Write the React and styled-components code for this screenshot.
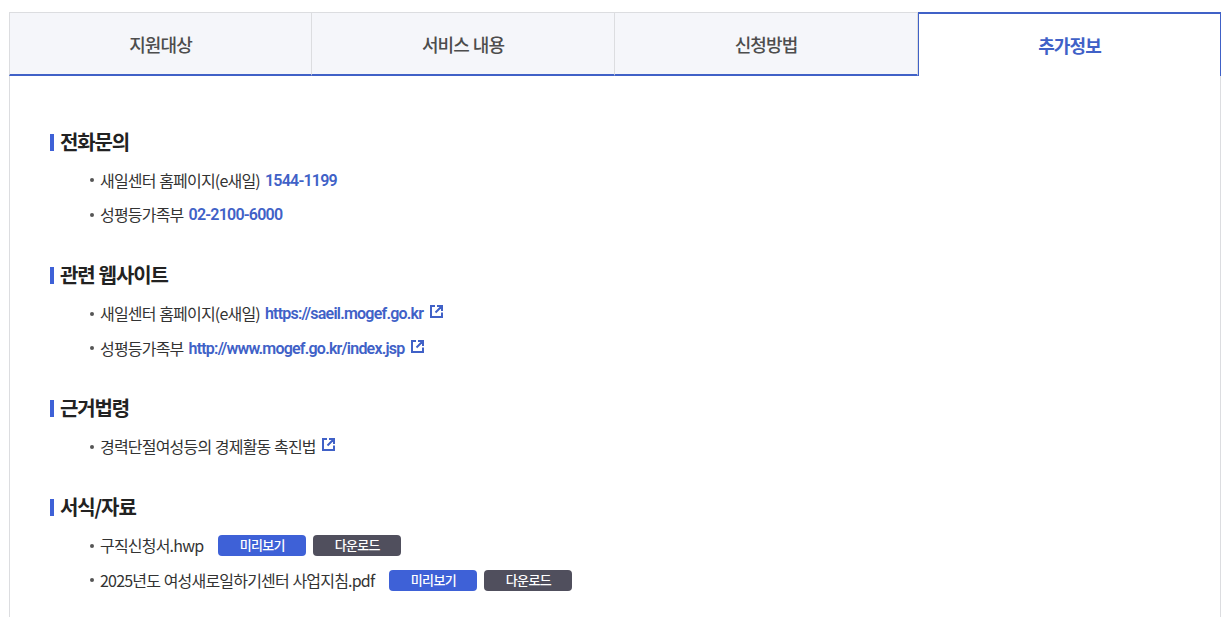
import React from "react";
import styled, { createGlobalStyle, css } from "styled-components";

const GlobalStyle = createGlobalStyle`
    * {
        box-sizing: border-box;
    }

    body {
        margin: 0;
        background: #fff;
        color: #333;
        font-family: "Noto Sans CJK KR", "Noto Sans", sans-serif;
        font-size: 16px;
        letter-spacing: -0.05em;
        word-spacing: 0.7px;
    }
`;

const Page = styled.div`
    display: flex;
    flex-direction: column;
    height: 100vh;
    padding: 12px 11px 0 9px;
    overflow: hidden;
`;

const TabList = styled.div`
    display: grid;
    grid-template-columns: repeat(4, 1fr);
    flex: none;
    height: 64px;
`;

const Tab = styled.button`
    display: flex;
    align-items: center;
    justify-content: center;
    margin: 0;
    padding: 0;
    border: 0 solid #dcdde0;
    border-width: 1px 1px 2px 0;
    border-bottom-color: #4061c7;
    background: #f5f6fa;
    color: #4d4d4d;
    font-family: inherit;
    font-size: 18px;
    font-weight: 500;
    line-height: 26px;
    letter-spacing: -0.05em;
    word-spacing: 0.7px;

    &:first-child {
        border-left-width: 1px;
    }

    ${props => props.$active && css`
        border-color: #4061c7;
        border-width: 2px 1px 0;
        background: #fff;
        color: #4061c7;
        font-weight: 700;
    `}
`;

const Panel = styled.div`
    flex: 1;
    min-height: 0;
    padding: 50px 40px 0;
    border: solid #dcdde0;
    border-width: 0 1px;
`;

const Section = styled.section`
    padding-bottom: 27px;
`;

const Title = styled.h2`
    display: flex;
    align-items: center;
    gap: 6px;
    height: 37px;
    margin: 0;
    padding-bottom: 6px;
    color: #222;
    font-size: 20px;
    font-weight: 700;
    line-height: 30px;
    letter-spacing: -0.057em;

    &::before {
        content: "";
        width: 4px;
        height: 17px;
        margin-top: 1px;
        background: #3e61d7;
    }
`;

const List = styled.ul`
    margin: 0;
    padding: 0 0 0 40px;
    list-style: none;
`;

const Item = styled.li`
    display: flex;
    align-items: center;
    height: 34.67px;
    line-height: 24px;

    &::before {
        content: "";
        width: 4px;
        height: 4px;
        margin-right: 6px;
        border-radius: 50%;
        background: #555;
    }
`;

const Label = styled.span`
    margin-bottom: 1.4px;
`;

const Contact = styled.a`
    margin: 1px 0 0 5px;
    color: #4061c7;
    font-family: Roboto, sans-serif;
    font-weight: 600;
    letter-spacing: -0.78px;
    text-decoration: none;
`;

const LinkIcon = styled.svg`
    flex: none;
    width: 13px;
    height: 13px;
    margin: 0 0 4px 6.5px;
    fill: none;
    stroke: #4061c7;
    stroke-width: 2;
`;

const Buttons = styled.div`
    display: flex;
    gap: 7px;
    margin-left: 15px;
`;

const Button = styled.button`
    width: 88px;
    height: 21px;
    padding: 0 0 1px;
    border: 0;
    border-radius: 4px;
    background: ${props => (props.$dark ? "#504f5d" : "#3e61d7")};
    color: #fff;
    font-family: inherit;
    font-size: 13px;
    font-weight: 500;
    line-height: 20px;
    letter-spacing: -0.05em;
`;

const External = () => (
    <LinkIcon viewBox="0 0 13 13">
        <path d="M5 1H1V12H12V7.5M7 1H12V6M12 1L5.5 7.5" />
    </LinkIcon>
);

const tabs = ["지원대상", "서비스 내용", "신청방법", "추가정보"];

const phones = [
    { name: "새일센터 홈페이지(e새일)", number: "1544-1199" },
    { name: "성평등가족부", number: "02-2100-6000" },
];

const sites = [
    { name: "새일센터 홈페이지(e새일)", url: "https://saeil.mogef.go.kr" },
    { name: "성평등가족부", url: "http://www.mogef.go.kr/index.jsp" },
];

const files = ["구직신청서.hwp", "2025년도 여성새로일하기센터 사업지침.pdf"];

const App = () => (
    <>
        <GlobalStyle />
        <Page>
            <TabList role="tablist">
                {tabs.map(tab => (
                    <Tab key={tab} role="tab" $active={tab === "추가정보"}>{tab}</Tab>
                ))}
            </TabList>
            <Panel>
                <Section>
                    <Title>전화문의</Title>
                    <List>
                        {phones.map(phone => (
                            <Item key={phone.number}>
                                <Label>{phone.name}</Label>
                                <Contact href={`tel:${phone.number}`}>{phone.number}</Contact>
                            </Item>
                        ))}
                    </List>
                </Section>
                <Section>
                    <Title>관련 웹사이트</Title>
                    <List>
                        {sites.map(site => (
                            <Item key={site.url}>
                                <Label>{site.name}</Label>
                                <Contact href={site.url}>{site.url}</Contact>
                                <External />
                            </Item>
                        ))}
                    </List>
                </Section>
                <Section>
                    <Title>근거법령</Title>
                    <List>
                        <Item>
                            <Label>경력단절여성등의 경제활동 촉진법</Label>
                            <External />
                        </Item>
                    </List>
                </Section>
                <Section>
                    <Title>서식/자료</Title>
                    <List>
                        {files.map(file => (
                            <Item key={file}>
                                <Label>{file}</Label>
                                <Buttons>
                                    <Button>미리보기</Button>
                                    <Button $dark>다운로드</Button>
                                </Buttons>
                            </Item>
                        ))}
                    </List>
                </Section>
            </Panel>
        </Page>
    </>
);

export default App;
